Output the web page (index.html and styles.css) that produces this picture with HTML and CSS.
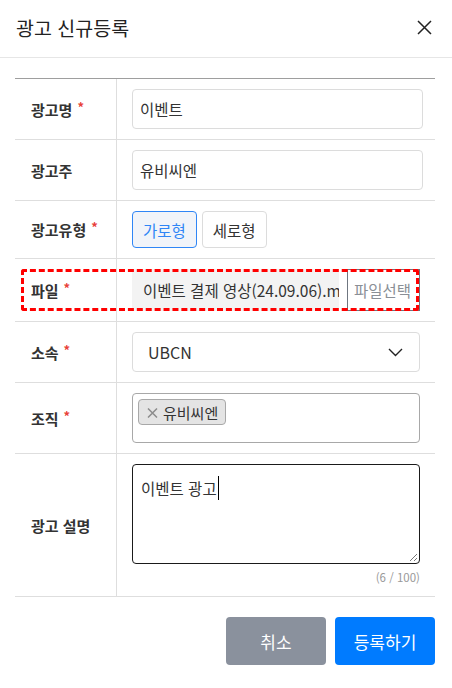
FILE: index.html
```html
<!DOCTYPE html>
<html lang="ko">
<head>
<meta charset="utf-8">
<title>광고 신규등록</title>
<link rel="stylesheet" href="styles.css">
</head>
<body>
<div class="modal">
  <div class="modal-header">
    <h1 class="modal-title">광고 신규등록</h1>
    <button class="close-btn" aria-label="닫기">
      <svg width="15" height="15" viewBox="0 0 15 15"><path d="M1 1 L14 14 M14 1 L1 14" stroke="#222" stroke-width="1.5" fill="none"/></svg>
    </button>
  </div>
  <div class="modal-body">
    <div class="form">
      <div class="row">
        <div class="label">광고명<span class="req">*</span></div>
        <div class="value pr-wide"><div class="input">이벤트</div></div>
      </div>
      <div class="row">
        <div class="label">광고주</div>
        <div class="value pr-wide"><div class="input">유비씨엔</div></div>
      </div>
      <div class="row">
        <div class="label">광고유형<span class="req">*</span></div>
        <div class="value">
          <div class="toggle-group">
            <button class="toggle active">가로형</button>
            <button class="toggle">세로형</button>
          </div>
        </div>
      </div>
      <div class="row">
        <div class="label">파일<span class="req">*</span></div>
        <div class="value">
          <div class="file-input">
            <div class="file-name">이벤트 결제 영상(24.09.06).mp4</div>
            <button class="file-btn">파일선택</button>
          </div>
        </div>
        <span class="highlight"></span>
      </div>
      <div class="row">
        <div class="label">소속<span class="req">*</span></div>
        <div class="value">
          <div class="select">
            <span>UBCN</span>
            <svg width="15" height="9" viewBox="0 0 15 9"><path d="M1 1 L7.5 7.5 L14 1" stroke="#222" stroke-width="1.4" fill="none"/></svg>
          </div>
        </div>
      </div>
      <div class="row">
        <div class="label">조직<span class="req">*</span></div>
        <div class="value">
          <div class="multi">
            <span class="tag"><svg class="tag-x" width="11" height="10" viewBox="0 0 11 10"><path d="M1 0.5 L10 9.5 M10 0.5 L1 9.5" stroke="#8c8c8c" stroke-width="1.5" fill="none"/></svg>유비씨엔</span>
          </div>
        </div>
      </div>
      <div class="row">
        <div class="label">광고 설명</div>
        <div class="value">
          <div class="textarea">이벤트 광고<span class="caret"></span>
            <svg class="grip" width="10" height="10" viewBox="0 0 10 10"><path d="M9 2 L2 9 M9 6 L6 9" stroke="#777" stroke-width="1" fill="none"/></svg>
          </div>
          <div class="counter">(6 / 100)</div>
        </div>
      </div>
    </div>
    <div class="footer">
      <button class="btn btn-cancel">취소</button>
      <button class="btn btn-primary">등록하기</button>
    </div>
  </div>
</div>
</body>
</html>
```

FILE: styles.css
```css
* { box-sizing: border-box; }
html, body { margin: 0; padding: 0; background: #fff; }
body {
  font-family: "Noto Sans CJK KR", "Noto Sans", sans-serif;
  color: #333;
  font-size: 15px;
}
button { font-family: inherit; cursor: pointer; }
.modal { width: 452px; }
.modal-header {
  height: 58px;
  border-bottom: 1px solid #e6e6e6;
  display: flex;
  align-items: center;
  justify-content: space-between;
  padding: 0 20px 3px 16px;
}
.modal-title {
  margin: 0;
  font-size: 19.5px;
  font-weight: 400;
  color: #222;
}
.close-btn {
  border: 0;
  background: none;
  padding: 0;
  width: 15px;
  height: 15px;
  display: flex;
}
.modal-body { padding: 20px 17px 0 15px; }
.form { border-top: 1px solid #9e9e9e; }
.row {
  display: grid;
  grid-template-columns: 102px 1fr;
  border-bottom: 1px solid #dedede;
  position: relative;
}
.label {
  border-right: 1px solid #dedede;
  padding-left: 16px;
  display: flex;
  align-items: center;
  font-weight: 700;
  font-size: 15px;
  color: #333;
  white-space: pre;
}
.req {
  color: #e8413b;
  margin-left: 5px;
  font-size: 13px;
  position: relative;
  top: -3px;
}
.value { padding: 10px 15px 10px 15px; }
.value.pr-wide { padding-right: 12px; }
.input {
  height: 40px;
  border: 1px solid #dcdcdc;
  border-radius: 4px;
  padding: 0 7px;
  display: flex;
  align-items: center;
  font-size: 15.5px;
  color: #333;
}
.toggle-group { display: flex; gap: 5px; }
.toggle {
  height: 37px;
  padding: 0 10px;
  border: 1px solid #dcdcdc;
  background: #fff;
  border-radius: 4px;
  font-size: 15.5px;
  color: #333;
}
.toggle.active {
  border-color: #2f86f6;
  background: #f1f4f9;
  color: #2f86f6;
}
.file-input { display: flex; height: 42px; gap: 8px; }
.file-name {
  width: 207px;
  flex: none;
  background: #f3f3f3;
  display: flex;
  align-items: center;
  padding: 0 0 0 11px;
  white-space: nowrap;
  overflow: hidden;
  font-size: 15.5px;
  color: #333;
}
.file-btn {
  flex: 1;
  border: 1px solid #6f7680;
  background: #fff;
  border-radius: 0;
  font-size: 15.5px;
  color: #8a8f96;
  padding: 0 0 0 6px;
  text-align: left;
  white-space: nowrap;
  overflow: hidden;
}
.highlight {
  position: absolute;
  left: 6px;
  top: 10px;
  width: 398px;
  height: 42px;
  border: 3px dashed #ff0000;
  border-radius: 3px;
  pointer-events: none;
}
.select {
  height: 40px;
  border: 1px solid #dcdcdc;
  border-radius: 4px;
  display: flex;
  align-items: center;
  justify-content: space-between;
  padding: 0 16px 0 15px;
  font-size: 16px;
  color: #333;
}
.multi {
  height: 50px;
  border: 1px solid #a8a8a8;
  border-radius: 4px;
  padding: 5px 5px;
}
.tag {
  display: inline-flex;
  align-items: center;
  height: 26px;
  padding: 0 7px 0 8px;
  background: #e4e4e4;
  border: 1px solid #a8a8a8;
  border-radius: 4px;
  font-size: 15px;
  color: #333;
}
.tag-x { margin-right: 5px; margin-top: 1px; }
.textarea {
  position: relative;
  height: 100px;
  border: 1px solid #1a1a1a;
  border-radius: 4px;
  padding: 11px 8px;
  font-size: 15.5px;
  color: #333;
  line-height: 24px;
}
.caret {
  display: inline-block;
  width: 1px;
  height: 24px;
  background: #000;
  vertical-align: top;
  margin-left: 1px;
}
.grip { position: absolute; right: 1px; bottom: 1px; }
.counter {
  text-align: right;
  font-size: 11.5px;
  color: #999;
  margin-top: 4px;
  line-height: 18px;
}
.footer {
  display: flex;
  justify-content: flex-end;
  gap: 9px;
  margin-top: 20px;
}
.btn {
  width: 100px;
  height: 48px;
  border: 0;
  border-radius: 4px;
  color: #fff;
  font-size: 17px;
}
.btn-cancel { background: #8a919d; }
.btn-primary { background: #007bff; }
```
